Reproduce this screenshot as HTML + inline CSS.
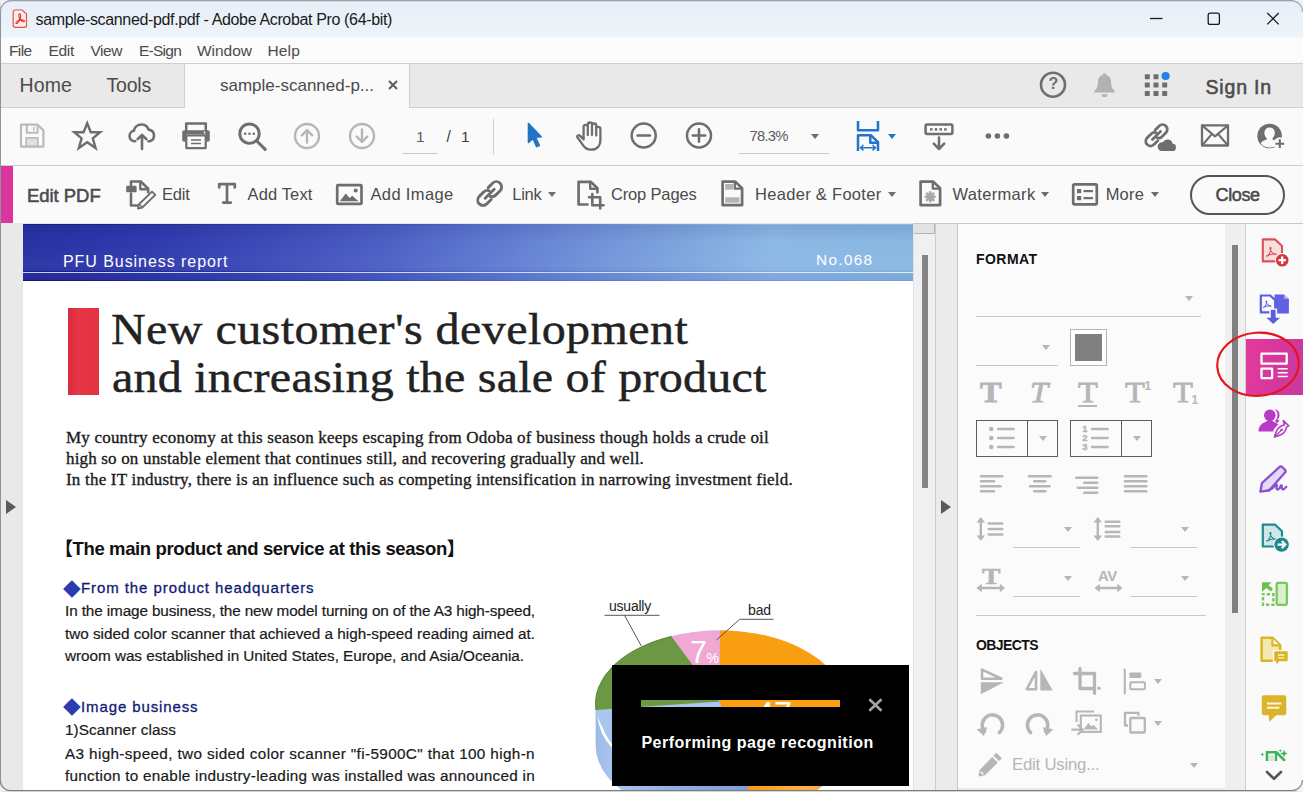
<!DOCTYPE html>
<html lang="en">
<head>
<meta charset="utf-8">
<title>sample-scanned-pdf.pdf - Adobe Acrobat Pro (64-bit)</title>
<style>
*{box-sizing:border-box;margin:0;padding:0}
html,body{width:1303px;height:792px;overflow:hidden;background:#fafafa;font-family:"Liberation Sans",sans-serif;color:#4b4b4b}
.abs,.t,svg.i{position:absolute}
#win{position:absolute;left:0;top:0;width:1303px;height:792px;overflow:hidden;background:#fafafa}
.t{white-space:nowrap;line-height:1}
svg.i{overflow:visible}
.s{fill:none;stroke:#6e6e6e;stroke-width:2;stroke-linecap:round;stroke-linejoin:round}
.f{fill:#6e6e6e;stroke:none}
.sd{fill:none;stroke:#b6b6b6;stroke-width:2;stroke-linecap:round;stroke-linejoin:round}
.fd{fill:#b6b6b6;stroke:none}
#titlebar{left:0;top:0;width:1303px;height:37px;background:linear-gradient(#e6eef7,#edf4fa)}
#menubar{left:0;top:37px;width:1303px;height:26px;background:#fbfbfb}
#tabbar{left:0;top:63px;width:1303px;height:45px;background:#e9e9e9;border-top:1px solid #cfcfcf;border-bottom:1px solid #cfcfcf}
#tabactive{left:184px;top:64px;width:226px;height:44px;background:#fafafa;border-left:1px solid #d0d0d0;border-right:1px solid #d0d0d0}
#toolbar{left:0;top:108px;width:1303px;height:58px;background:#fafafa;border-bottom:1px solid #cdcdcd}
#editbar{left:0;top:166px;width:1303px;height:57px;background:#fafafa}
#pinkbar{left:1px;top:166px;width:12px;height:57px;background:#d9359c}
.ul{position:absolute;height:1px;background:#c9c9c9}
.tri{position:absolute;width:0;height:0;border-left:4px solid transparent;border-right:4px solid transparent;border-top:5px solid #6e6e6e}
.tri.d{border-top-color:#b6b6b6}
.tri.b{border-top-color:#2274c8}
.ti{font-family:'Liberation Serif',serif;font-size:29px;color:#b6b6b6;-webkit-text-stroke:.8px #b6b6b6;transform:scaleX(1.12);transform-origin:0 0}
.bd{-webkit-text-stroke:.35px #1a1a1a}
.hd{-webkit-text-stroke:.45px #222}
.nv{-webkit-text-stroke:.3px #101a74}
.bt{-webkit-text-stroke:.2px #1a1a1a}
.sb{-webkit-text-stroke:.55px currentColor}
</style>
</head>
<body>
<div id="win">
<div class="abs" id="titlebar"></div>
<div class="abs" id="menubar"></div>
<div class="abs" id="tabbar"></div>
<div class="abs" id="tabactive"></div>
<div class="abs" id="toolbar"></div>
<div class="abs" id="editbar"></div>
<div class="abs" id="pinkbar"></div>
<!-- title icon -->
<svg class="i" style="left:12px;top:9px" width="16" height="20" viewBox="0 0 16 20"><path d="M3.200 1h7l4.300 4.100v11.200a2 2 0 0 1-2 2H3.200a2 2 0 0 1-2-2V3a2 2 0 0 1 2-2z" fill="#fdf0ef" stroke="#e4504a" stroke-width="1.200"/><g fill="none" stroke="#e5322c" stroke-width="1.100" stroke-linejoin="round"><path d="M8 10.600C6.500 7.600 6.300 4.900 7.600 4.700 9 4.600 9 7.600 8 10.600z"/><path d="M8 10.600C5.500 11.600 3.300 13.500 4 14.400 4.900 15.300 6.800 13.100 8 10.600z"/><path d="M8 10.600C10.500 10.500 12.800 11.100 12.600 12.200 12.300 13.300 9.800 12.400 8 10.600z"/></g></svg>
<!-- window controls -->
<svg class="i" style="left:1146px;top:8px" width="140" height="22" viewBox="0 0 140 22"><g fill="none" stroke="#1b1b1b" stroke-width="1.300"><path d="M4 10.500h12.500"/><rect x="62.200" y="5.200" width="11.200" height="11.200" rx="2"/><path d="M121.300 5l11.400 11.400M132.700 5l-11.400 11.400"/></g></svg>
<!-- tab close x -->
<svg class="i" style="left:388px;top:80px" width="10" height="10" viewBox="0 0 10 10"><path d="M1 1l8 8M9 1l-8 8" stroke="#5a5a5a" stroke-width="1.900" fill="none"/></svg>
<!-- help -->
<svg class="i" style="left:1039px;top:71px" width="28" height="28" viewBox="0 0 28 28"><circle cx="14" cy="13.700" r="12" class="s" style="stroke-width:2.60"/></svg>
<span class="t" style="left:1048.500px;top:76px;font-size:16px;font-weight:bold;color:#6e6e6e">?</span>
<!-- bell -->
<svg class="i" style="left:1093px;top:72px" width="23" height="27" viewBox="0 0 23 27"><path d="M11.500 1.200c1.100 0 1.800.8 1.800 1.900 3.200.9 4.800 3.600 4.800 7 0 4.500.9 6.600 3.600 8.900v1.500H1.300V19c2.700-2.300 3.600-4.400 3.600-8.900 0-3.400 1.600-6.100 4.800-7 0-1.100.7-1.900 1.800-1.900zM8.600 22.200h5.800a2.900 2.900 0 0 1-5.800 0z" fill="#b2b2b2"/></svg>
<!-- apps grid -->
<svg class="i" style="left:1144px;top:71px" width="27" height="27" viewBox="0 0 27 27"><g fill="#6e6e6e"><rect x=".8" y="3.200" width="5" height="5" rx=".6"/><rect x="9.500" y="3.200" width="5" height="5" rx=".6"/><rect x=".8" y="11.600" width="5" height="5" rx=".6"/><rect x="9.500" y="11.600" width="5" height="5" rx=".6"/><rect x="18.200" y="11.600" width="5" height="5" rx=".6"/><rect x=".8" y="20" width="5" height="5" rx=".6"/><rect x="9.500" y="20" width="5" height="5" rx=".6"/><rect x="18.200" y="20" width="5" height="5" rx=".6"/></g><circle cx="21.600" cy="5" r="4.100" fill="#2680eb"/></svg>
<!-- toolbar: save (disabled) -->
<svg class="i" style="left:19px;top:122px" width="27" height="27" viewBox="0 0 27 27"><path d="M2 2.700h16.500l5.900 5.700v16.200H2z" fill="none" stroke="#bababa" stroke-width="2.200" stroke-linejoin="round"/><path d="M7.800 3v7.800h10.800V3" fill="none" stroke="#bababa" stroke-width="2"/><rect x="14" y="4.800" width="1.500" height="4" fill="#bababa"/><rect x="7.200" y="15.800" width="11.600" height="8.400" fill="#e0e0e0" stroke="#bababa" stroke-width="1.600"/></svg>
<!-- star -->
<svg class="i" style="left:71px;top:120px" width="32" height="32" viewBox="0 0 32 32"><path d="M16.200 3.200l3.600 9h9.300l-7.300 6.100 2.800 9.700-8.400-5.800L7.800 28l2.800-9.700-7.300-6.100h9.300z" class="s" style="stroke-width:2.40;stroke-linejoin:miter"/></svg>
<!-- cloud upload -->
<svg class="i" style="left:127px;top:122px" width="30" height="29" viewBox="0 0 30 29"><path d="M8.200 19.300H7.500a5.300 5.300 0 0 1-.6-10.500 7.600 7.600 0 0 1 14.700-1.200 6 6 0 0 1 1.200 11.700h-1.300" class="s" style="stroke-width:2.60"/><path d="M15 27V13.500M10.600 17.200L15 12.800l4.400 4.400" class="s" style="stroke-width:2.60"/></svg>
<!-- printer -->
<svg class="i" style="left:181px;top:121px" width="30" height="29" viewBox="0 0 30 29"><path d="M5.200 9.500V2.400h19.600v7.100" class="s" style="stroke-width:2.50"/><path d="M3.200 9.200h23.600a2 2 0 0 1 2 2v7.600a2 2 0 0 1-2 2H25v-7.200H5v7.200H3.200a2 2 0 0 1-2-2v-7.600a2 2 0 0 1 2-2z" class="f"/><rect x="5.300" y="14.500" width="19.400" height="12.600" fill="#fafafa" stroke="#6e6e6e" stroke-width="2.200" stroke-linejoin="round"/><path d="M10 19h10M10 22.500h10" stroke="#6e6e6e" stroke-width="1.500"/><circle cx="23.600" cy="11.500" r=".9" fill="#fafafa"/></svg>
<!-- search -->
<svg class="i" style="left:237px;top:121px" width="31" height="31" viewBox="0 0 31 31"><circle cx="12.500" cy="12.700" r="9.700" class="s" style="stroke-width:2.90"/><path d="M19.800 20l8.400 8.300" class="s" style="stroke-width:3.10"/><circle cx="8.200" cy="12.700" r="1.300" class="f"/><circle cx="12.500" cy="12.700" r="1.300" class="f"/><circle cx="16.800" cy="12.700" r="1.300" class="f"/></svg>
<!-- up / down (disabled) -->
<svg class="i" style="left:293px;top:122px" width="28" height="28" viewBox="0 0 28 28"><circle cx="14" cy="14" r="12" class="sd" style="stroke-width:2.40"/><path d="M14 20.500V8.500M8.800 13.300L14 8l5.200 5.300" class="sd" style="stroke-width:2.40"/></svg>
<svg class="i" style="left:348px;top:122px" width="28" height="28" viewBox="0 0 28 28"><circle cx="14" cy="14" r="12" class="sd" style="stroke-width:2.40"/><path d="M14 7.500v12M8.800 14.700L14 20l5.200-5.300" class="sd" style="stroke-width:2.40"/></svg>
<div class="ul" style="left:402px;top:153px;width:36px"></div>
<div class="abs" style="left:493px;top:119px;width:1px;height:36px;background:#cfcfcf"></div>
<!-- select arrow (blue) -->
<svg class="i" style="left:526px;top:121px" width="18" height="28" viewBox="0 0 18 28"><path d="M2.500 2.500l12.700 13.300-5.800.4 3.900 8.200-2.600 1.200-3.800-8.300-4.400 4.200z" fill="#2274c8" stroke="#2274c8" stroke-width="1.600" stroke-linejoin="round"/></svg>
<!-- hand -->
<svg class="i" style="left:574px;top:121px" width="30" height="31" viewBox="0 0 30 31"><path d="M9.600 18.500V6a2.100 2.100 0 0 1 4.200 0v8V3.600a2.100 2.100 0 0 1 4.200 0V14V4.600a2.100 2.100 0 0 1 4.200 0v9.900V8a2.100 2.100 0 0 1 4.200 0v11c0 6-3.600 9.700-9.400 9.700-4.400 0-6.600-2-8.700-5.600L3.500 16.500c-1-1.700 1.300-3.200 2.700-1.600z" class="s" style="stroke-width:2.300"/></svg>
<!-- zoom out / in -->
<svg class="i" style="left:630px;top:122px" width="28" height="28" viewBox="0 0 28 28"><circle cx="13.700" cy="13.500" r="12" class="s" style="stroke-width:2.50"/><path d="M7.500 13.500h12.400" class="s" style="stroke-width:2.50"/></svg>
<svg class="i" style="left:685px;top:122px" width="28" height="28" viewBox="0 0 28 28"><circle cx="14" cy="13.500" r="12" class="s" style="stroke-width:2.50"/><path d="M7.800 13.500h12.400M14 7.300v12.400" class="s" style="stroke-width:2.50"/></svg>
<div class="ul" style="left:739px;top:153px;width:90px"></div>
<div class="tri" style="left:811px;top:134px"></div>
<!-- fit width (blue) -->
<svg class="i" style="left:856px;top:120px" width="24" height="32" viewBox="0 0 24 32"><g fill="none" stroke="#2274c8" stroke-width="2.500" stroke-linejoin="round"><path d="M2 1v9.300h20V1"/><path d="M2 31V15.200h12.800l7.200 7V31"/><path d="M14.300 15.500v7.200h7.400"/></g><path d="M4.500 27.700h15M7.500 25l-3 2.700 3 2.700M16.500 25l3 2.700-3 2.700" fill="none" stroke="#2274c8" stroke-width="1.500"/></svg>
<div class="tri b" style="left:888px;top:134px"></div>
<!-- keyboard / scroll -->
<svg class="i" style="left:924px;top:122px" width="30" height="29" viewBox="0 0 30 29"><rect x="1.600" y="2.500" width="26.800" height="9.500" rx="1.500" class="s" style="stroke-width:2.50"/><g class="f"><rect x="6" y="6.200" width="2.600" height="2.400"/><rect x="10.700" y="6.200" width="2.600" height="2.400"/><rect x="15.400" y="6.200" width="2.600" height="2.400"/><rect x="20.100" y="6.200" width="2.600" height="2.400"/></g><path d="M15 15.500v11.300M9.800 21.700L15 27l5.200-5.300" class="s" style="stroke-width:2.50"/></svg>
<!-- more dots -->
<svg class="i" style="left:985px;top:132px" width="25" height="8" viewBox="0 0 25 8"><circle cx="3.400" cy="4" r="2.800" class="f"/><circle cx="12.400" cy="4" r="2.800" class="f"/><circle cx="21.400" cy="4" r="2.800" class="f"/></svg>
<!-- link cloud -->
<svg class="i" style="left:1143px;top:121px" width="33" height="31" viewBox="0 0 33 31"><g class="s" style="stroke-width:3.1" transform="translate(.3 1.200) scale(.9)"><path d="M13.200 8.600l4.400-4.400a5.300 5.300 0 0 1 7.500 7.500l-4.400 4.400a5.300 5.300 0 0 1-5.600 1.200"/><path d="M16.200 20.500l-4.400 4.400a5.300 5.300 0 0 1-7.500-7.500l4.400-4.400a5.300 5.300 0 0 1 5.600-1.200"/><path d="M10.200 19.200l9-9"/></g><path d="M18.300 30h10.800a3.600 3.600 0 0 0 .5-7.200 5.200 5.200 0 0 0-9.700-1.500 4.400 4.400 0 0 0-1.600 8.700z" fill="#fafafa" stroke="#fafafa" stroke-width="2.400"/><path d="M18.300 30h10.800a3.600 3.600 0 0 0 .5-7.200 5.200 5.200 0 0 0-9.700-1.500 4.400 4.400 0 0 0-1.600 8.700z" class="f"/></svg>
<!-- mail -->
<svg class="i" style="left:1200px;top:123px" width="30" height="25" viewBox="0 0 30 25"><rect x="2" y="2.300" width="26" height="20.200" class="s" style="stroke-width:2.30"/><path d="M2.300 2.600L15 13.400 27.700 2.600M2.300 22.200l9.700-11.300M27.700 22.200L18 10.900" class="s" style="stroke-width:2.10"/></svg>
<!-- person + -->
<svg class="i" style="left:1256px;top:122px" width="31" height="29" viewBox="0 0 31 29"><circle cx="13.600" cy="14" r="12.300" class="f"/><path d="M13.600 5.400c3.400 0 5.200 2.600 5.200 5.600 0 2.600-1.200 4.300-2.300 5.200v1.400c3 .9 5.200 2.100 6.100 3.900a12 12 0 0 1-18 0c.9-1.800 3.100-3 6.100-3.900v-1.400c-1.100-.9-2.300-2.600-2.300-5.200 0-3 1.800-5.600 5.200-5.600z" fill="#fafafa"/><circle cx="23.800" cy="21.600" r="6.300" fill="#fafafa"/><path d="M23.800 17.300v8.800M19.400 21.700h8.800" stroke="#6e6e6e" stroke-width="2.100" fill="none"/></svg>
<!-- edit bar icons -->
<svg class="i" style="left:125px;top:179px" width="32" height="31" viewBox="0 0 32 31"><path d="M6 6.500V2.500h9.800l7.400 7.200v3.500M6 14.500v12h7.200" class="s" style="stroke-width:2.60"/><path d="M15.300 2.800v7.400h7.600" class="s" style="stroke-width:2.40"/><rect x="1.200" y="6.800" width="10.400" height="6.400" rx="1" class="f"/><path d="M27 12.600l3.300 3.300-13 12.600-4.300 1.100 1-4.300z" fill="#fafafa" stroke="#6e6e6e" stroke-width="1.900" stroke-linejoin="round"/><path d="M14.700 25.600l2.600 2.600" stroke="#6e6e6e" stroke-width="1.400" fill="none"/></svg>
<svg class="i" style="left:217px;top:182px" width="20" height="23" viewBox="0 0 20 23"><path d="M2.200 5.500V2.200h15.600v3.300M10 2.500v18M6.200 20.600h7.600" class="s" style="stroke-width:2.70"/></svg>
<svg class="i" style="left:335px;top:183px" width="29" height="23" viewBox="0 0 29 23"><rect x="2.200" y="2.200" width="24.300" height="18.700" rx="1" class="s" style="stroke-width:2.70"/><path d="M4.800 18.300l6-7.700 3.800 4.300 2.600-2.200 6.300 5.600z" class="f"/><circle cx="20.700" cy="7.400" r="2" class="f"/></svg>
<svg class="i" style="left:475px;top:179px" width="30" height="30" viewBox="0 0 30 30"><g class="s" style="stroke-width:2.90"><path d="M13.200 8.600l4.400-4.400a5.300 5.300 0 0 1 7.500 7.500l-4.400 4.400a5.300 5.300 0 0 1-5.600 1.200"/><path d="M16.200 20.500l-4.400 4.400a5.300 5.300 0 0 1-7.500-7.500l4.400-4.400a5.300 5.300 0 0 1 5.600-1.200"/><path d="M10.200 19.200l9-9"/></g></svg>
<div class="tri" style="left:547.500px;top:192px"></div>
<svg class="i" style="left:576px;top:179px" width="29" height="31" viewBox="0 0 29 31"><path d="M11.500 25.500H2.600V2.800h12.100l6.700 6.500v4" class="s" style="stroke-width:2.70"/><path d="M14.200 3.200v6.600h6.800" class="s" style="stroke-width:2.40"/><path d="M13 18.300h11.200v11.200M16.300 15v11.300h11.200" class="s" style="stroke-width:2.60"/></svg>
<svg class="i" style="left:720px;top:179px" width="25" height="29" viewBox="0 0 25 29"><path d="M2.600 2.600h12.600l6.900 6.700v16.800H2.600z" class="s" style="stroke-width:2.70"/><path d="M14.800 3v6.700h6.900" class="s" style="stroke-width:2.30"/><rect x="5.200" y="5" width="8" height="5.700" fill="#b4b4b4"/><rect x="5.200" y="18.300" width="14.300" height="5.400" fill="#b4b4b4"/></svg>
<div class="tri" style="left:888px;top:192px"></div>
<svg class="i" style="left:918px;top:179px" width="25" height="29" viewBox="0 0 25 29"><path d="M2.600 2.600h12.600l6.900 6.700v16.800H2.600z" class="s" style="stroke-width:2.70"/><path d="M14.800 3v6.700h6.900" class="s" style="stroke-width:2.30"/><g stroke="#a8a8a8" stroke-width="2.600" stroke-linecap="round"><path d="M12.200 13.300v9M7.700 17.800h9M9 14.600l6.400 6.400M15.400 14.600L9 21"/></g></svg>
<div class="tri" style="left:1041px;top:192px"></div>
<svg class="i" style="left:1071px;top:182px" width="28" height="25" viewBox="0 0 28 25"><rect x="2.200" y="2.300" width="23.600" height="20" rx="1.200" class="s" style="stroke-width:2.70"/><g class="f"><rect x="6" y="7" width="4.200" height="4.200"/><rect x="6" y="14" width="4.200" height="4.200"/><rect x="12.500" y="8" width="9.500" height="2.200"/><rect x="12.500" y="15" width="9.500" height="2.200"/></g></svg>
<div class="tri" style="left:1151px;top:192px"></div>
<div class="abs" style="left:1190px;top:174.500px;width:95px;height:40px;border:2px solid #555;border-radius:20px"></div>

<span class="t" id="ttl" style="left:35.5px;top:11.86px;font-size:16px;color:#1a1a1a;letter-spacing:-0.352px;">sample-scanned-pdf.pdf - Adobe Acrobat Pro (64-bit)</span>
<span class="t" id="m1" style="left:9px;top:43.38px;font-size:15.5px;color:#4b4b4b;letter-spacing:-0.621px;">File</span>
<span class="t" id="m2" style="left:48.5px;top:43.38px;font-size:15.5px;color:#4b4b4b;letter-spacing:-0.305px;">Edit</span>
<span class="t" id="m3" style="left:90.5px;top:43.38px;font-size:15.5px;color:#4b4b4b;letter-spacing:-0.457px;">View</span>
<span class="t" id="m4" style="left:139px;top:43.38px;font-size:15.5px;color:#4b4b4b;letter-spacing:-0.755px;">E-Sign</span>
<span class="t" id="m5" style="left:197px;top:43.38px;font-size:15.5px;color:#4b4b4b;letter-spacing:-0.023px;">Window</span>
<span class="t" id="m6" style="left:267.5px;top:43.38px;font-size:15.5px;color:#4b4b4b;letter-spacing:0.152px;">Help</span>
<span class="t" id="home" style="left:19.5px;top:76.09px;font-size:19.5px;color:#4b4b4b;letter-spacing:0.117px;">Home</span>
<span class="t" id="tools" style="left:106.5px;top:76.09px;font-size:19.5px;color:#4b4b4b;letter-spacing:-0.206px;">Tools</span>
<span class="t" id="tab" style="left:220px;top:77.11px;font-size:17px;color:#4b4b4b;">sample-scanned-p...</span>
<span class="t sb" id="signin" style="left:1205.5px;top:78.19px;font-size:19.5px;color:#4b4b4b;letter-spacing:0.826px;">Sign In</span>
<span class="t" id="pg1" style="left:416px;top:129.18px;font-size:15.5px;color:#5c5c5c;">1</span>
<span class="t" id="pg2" style="left:446.5px;top:129.18px;font-size:15.5px;color:#3c3c3c;transform:scaleY(1.05);">/</span>
<span class="t" id="pg3" style="left:461px;top:129.18px;font-size:15.5px;color:#3c3c3c;">1</span>
<span class="t" id="zoom" style="left:749.5px;top:129.47px;font-size:14.8px;color:#5c5c5c;letter-spacing:-0.754px;">78.3%</span>
<span class="t sb" id="editpdf" style="left:27px;top:186.54px;font-size:18.5px;color:#4b4b4b;letter-spacing:-0.041px;">Edit PDF</span>
<span class="t" id="e1" style="left:162px;top:185.63px;font-size:16.5px;color:#4b4b4b;letter-spacing:-0.209px;">Edit</span>
<span class="t" id="e2" style="left:247.5px;top:185.63px;font-size:16.5px;color:#4b4b4b;letter-spacing:0.137px;">Add Text</span>
<span class="t" id="e3" style="left:370.5px;top:185.63px;font-size:16.5px;color:#4b4b4b;letter-spacing:0.354px;">Add Image</span>
<span class="t" id="e4" style="left:512.3px;top:185.63px;font-size:16.5px;color:#4b4b4b;letter-spacing:-0.295px;">Link</span>
<span class="t" id="e5" style="left:611px;top:185.63px;font-size:16.5px;color:#4b4b4b;letter-spacing:-0.164px;">Crop Pages</span>
<span class="t" id="e6" style="left:755px;top:185.63px;font-size:16.5px;color:#4b4b4b;letter-spacing:0.301px;">Header &amp; Footer</span>
<span class="t" id="e7" style="left:952.5px;top:185.63px;font-size:16.5px;color:#4b4b4b;letter-spacing:0.326px;">Watermark</span>
<span class="t" id="e8" style="left:1105.7px;top:185.63px;font-size:16.5px;color:#4b4b4b;letter-spacing:0.177px;">More</span>
<span class="t sb" id="close" style="left:1215.5px;top:185.56px;font-size:18px;color:#4b4b4b;letter-spacing:-0.366px;">Close</span>

<!-- document area -->
<div class="abs" style="left:13px;top:223px;width:900px;height:1px;background:#e6e6e6"></div>
<div class="abs" id="navstrip" style="left:1px;top:223px;width:22px;height:568px;background:#e9e9e9"></div>
<div class="abs" style="left:6px;top:500px;width:0;height:0;border-top:7px solid transparent;border-bottom:7px solid transparent;border-left:10px solid #5a5a5a"></div>
<div class="abs" id="page" style="left:23px;top:224px;width:890px;height:568px;background:#fff;overflow:hidden">
 <div class="abs" id="banner" style="left:0;top:0;width:890px;height:57px;background:linear-gradient(90deg,#2832a4 0%,#2f3aad 14%,#3c4ab8 27%,#4b5ec4 40%,#5d78d0 52%,#6f8fd8 63%,#7fa7de 75%,#8cb8e6 84%,#89b7e1 100%)"></div>
 <div class="abs" style="left:0;top:0;width:890px;height:1px;background:linear-gradient(90deg,rgba(10,10,90,.5),rgba(10,10,90,.15) 50%,rgba(10,10,90,0) 80%)"></div>
 <div class="abs" style="left:0;top:1px;width:890px;height:56px;background:linear-gradient(180deg,rgba(10,10,70,.10) 0%,rgba(10,10,70,0) 30%,rgba(255,255,255,.03) 70%,rgba(0,0,60,.04) 100%)"></div>
 <div class="abs" style="left:0;top:49px;width:890px;height:8px;background:linear-gradient(90deg,rgba(20,20,120,.22),rgba(40,70,190,.14) 55%,rgba(60,100,200,.10))"></div>
 <div class="abs" style="left:0;top:46.800px;width:890px;height:1px;background:linear-gradient(90deg,rgba(10,10,100,.55),rgba(30,50,150,.2) 50%,rgba(30,50,150,.05))"></div>
 <div class="abs" style="left:0;top:47.700px;width:890px;height:1.300px;background:linear-gradient(90deg,#c8cef5,#cfdcf6 60%,#e2ecfa)"></div>
 <div class="abs" style="left:0;top:56px;width:890px;height:1px;background:linear-gradient(90deg,rgba(16,16,100,.7),rgba(60,90,180,.3) 55%,rgba(90,130,210,.25))"></div>
 <div class="abs" id="redblock" style="left:45.300px;top:84.400px;width:30.500px;height:86.600px;background:linear-gradient(90deg,#d92c3e,#e83546 35%,#e4303f)"></div>
 <!-- pie chart: coordinates relative to page (page origin 23,224) -->
 <svg class="i" style="left:0;top:0" width="890" height="568" viewBox="23 224 890 568">
  <defs>
   <linearGradient id="gside" x1="0" y1="0" x2="1" y2="0"><stop offset="0" stop-color="#9dbbe6"/><stop offset=".12" stop-color="#a9c6ee"/><stop offset=".5" stop-color="#8fb0e2"/><stop offset="1" stop-color="#7d9fd8"/></linearGradient>
   <linearGradient id="gor" x1="0" y1="0" x2="1" y2="0"><stop offset="0" stop-color="#f79a12"/><stop offset=".6" stop-color="#fbb24a"/><stop offset="1" stop-color="#f5a030"/></linearGradient>
  </defs>
  <!-- side wall -->
  <path d="M595.600 703.500V745A124 73 0 0 0 748 816.500V703.500z" fill="url(#gside)"/>
  <path d="M748 703.500V816.500A124 73 0 0 0 843.600 745V703.500z" fill="url(#gor)"/>
  <path d="M598.500 716c1.500 11 6 22 14.500 31" fill="none" stroke="#fff" stroke-width="2.600"/>
  <!-- top face -->
  <ellipse cx="719.600" cy="703.500" rx="124" ry="73" fill="#a9c7ee"/>
  <!-- orange 47% -->
  <path d="M719.600 701.500V630.500A124 73 0 0 1 743.300 775.200z" fill="#fb9f12"/>
  <!-- pink 7% -->
  <path d="M719.600 701.500V630.500A124 73 0 0 0 671.300 636.300z" fill="#f2a8d4"/>
  <!-- green -->
  <path d="M719.600 701.500L671.300 636.300A124 73 0 0 0 596 710z" fill="#6c9743"/>
  <path d="M596 710A124 73 0 0 1 671.300 636.300" fill="none" stroke="#5b8438" stroke-width="1"/>
  <!-- labels leader lines -->
  <path d="M604.500 615.300H659.500M624.500 615.300L641.300 646" fill="none" stroke="#444" stroke-width=".9"/>
  <path d="M773.500 619.300H739.600L716.500 640" fill="none" stroke="#444" stroke-width=".9"/>
  <text x="690" y="662.500" font-family="Liberation Sans,sans-serif" font-size="31" fill="#fff" textLength="17" lengthAdjust="spacingAndGlyphs">7</text>
  <text x="706.500" y="662.500" font-family="Liberation Sans,sans-serif" font-size="14" fill="#fff">%</text>
  <text x="756" y="725" font-family="Liberation Sans,sans-serif" font-size="33" fill="#fff" textLength="36" lengthAdjust="spacingAndGlyphs">47</text>
 </svg>

</div>
<span class="t" id="d1" style="left:63px;top:253.66px;font-size:16px;color:#fff;letter-spacing:0.942px;">PFU Business report</span>
<span class="t" id="d2" style="left:816px;top:251.66px;font-size:15.4px;color:#fff;letter-spacing:1.310px;">No.068</span>
<span class="t hd" id="h1" style="left:111px;top:306.93px;font-size:44.5px;font-family:'Liberation Serif',serif;color:#222;letter-spacing:0.384px;transform:scaleX(1.08);transform-origin:0 50%;">New customer&#39;s development</span>
<span class="t hd" id="h2" style="left:112px;top:354.53px;font-size:44.5px;font-family:'Liberation Serif',serif;color:#222;letter-spacing:0.198px;transform:scaleX(1.08);transform-origin:0 50%;">and increasing the sale of product</span>
<span class="t bd" id="p1" style="left:66px;top:429.26px;font-size:17px;font-family:'Liberation Serif',serif;color:#1a1a1a;letter-spacing:0.201px;">My country economy at this season keeps escaping from Odoba of business though holds a crude oil</span>
<span class="t bd" id="p2" style="left:66px;top:449.76px;font-size:17px;font-family:'Liberation Serif',serif;color:#1a1a1a;letter-spacing:0.170px;">high so on unstable element that continues still, and recovering gradually and well.</span>
<span class="t bd" id="p3" style="left:66px;top:470.76px;font-size:17px;font-family:'Liberation Serif',serif;color:#1a1a1a;letter-spacing:0.204px;">In the IT industry, there is an influence such as competing intensification in narrowing investment field.</span>
<span class="t" id="s0" style="left:54.5px;top:540.34px;font-size:18.5px;font-family:'Liberation Sans','Noto Sans CJK JP',sans-serif;font-weight:bold;color:#111;letter-spacing:-0.382px;">【The main product and service at this season】</span>
<span class="t" id="s1d" style="left:63.2px;top:575.73px;font-size:23px;color:#2a3cb0;">◆</span>
<span class="t nv" id="s1" style="left:81px;top:580.40px;font-size:15px;color:#101a74;letter-spacing:0.921px;">From the product headquarters</span>
<span class="t bt" id="b1" style="left:65px;top:603.05px;font-size:15.3px;color:#1a1a1a;letter-spacing:-0.115px;">In the image business, the new model turning on of the A3 high-speed,</span>
<span class="t bt" id="b2" style="left:65px;top:625.55px;font-size:15.3px;color:#1a1a1a;letter-spacing:-0.016px;">two sided color scanner that achieved a high-speed reading aimed at.</span>
<span class="t bt" id="b3" style="left:65px;top:647.85px;font-size:15.3px;color:#1a1a1a;letter-spacing:-0.042px;">wroom was established in United States, Europe, and Asia/Oceania.</span>
<span class="t" id="s2d" style="left:63.2px;top:694.23px;font-size:23px;color:#2a3cb0;">◆</span>
<span class="t nv" id="s2" style="left:81px;top:698.90px;font-size:15px;color:#101a74;letter-spacing:0.888px;">Image business</span>
<span class="t bt" id="b4" style="left:65px;top:722.35px;font-size:15.3px;color:#1a1a1a;letter-spacing:0.087px;">1)Scanner class</span>
<span class="t bt" id="b5" style="left:65px;top:745.65px;font-size:15.3px;color:#1a1a1a;letter-spacing:0.352px;">A3 high-speed, two sided color scanner &quot;fi-5900C&quot; that 100 high-n</span>
<span class="t bt" id="b6" style="left:65px;top:768.05px;font-size:15.3px;color:#1a1a1a;letter-spacing:0.267px;">function to enable industry-leading was installed was announced in</span>
<span class="t" id="l1" style="left:609px;top:598.85px;font-size:14px;color:#222;letter-spacing:-0.228px;">usually</span>
<span class="t" id="l2" style="left:748px;top:602.85px;font-size:14px;color:#222;letter-spacing:-0.120px;">bad</span>
<!-- progress toast -->
<div class="abs" id="toast" style="left:612px;top:665px;width:297px;height:121px;border-style:solid;border-color:#000;border-width:35px 69px 79.500px 29px"></div>
<svg class="i" style="left:868px;top:698px" width="15" height="14" viewBox="0 0 15 14"><path d="M1.300 1.200l12.200 11.600M13.500 1.200L1.300 12.800" stroke="#a4a4a4" stroke-width="2.600" fill="none"/></svg>

<span class="t" id="tst" style="left:641.4px;top:735.26px;font-size:16px;font-weight:bold;color:#fff;letter-spacing:0.504px;">Performing page recognition</span>
<!-- doc scrollbar + splitter -->
<div class="abs" style="left:913px;top:224px;width:22px;height:566px;background:#f0f0f0;border-left:1px solid #e2e2e2"></div>
<div class="abs" style="left:914px;top:224px;width:21px;height:10px;background:#e3e3e3;border-bottom:1px solid #b4b4b4;border-right:1px solid #b4b4b4"></div>
<div class="abs" style="left:922px;top:255px;width:6px;height:232.500px;background:#848484"></div>
<div class="abs" style="left:935px;top:224px;width:23px;height:566px;background:#ebebeb;border-left:1px solid #cdcdcd;border-right:1px solid #c6c6c6"></div>
<div class="abs" style="left:941px;top:500px;width:0;height:0;border-top:7px solid transparent;border-bottom:7px solid transparent;border-left:10px solid #5a5a5a"></div>
<div class="abs" style="left:913px;top:223px;width:390px;height:1px;background:#c8c8c8"></div>

<!-- right format panel -->
<div class="abs" id="panel" style="left:958px;top:224px;width:267px;height:564px;background:#fbfbfb"></div>
<div class="abs" style="left:958px;top:788px;width:345px;height:4px;background:#ebebeb"></div>
<div class="abs" style="left:1225px;top:224px;width:20px;height:567px;background:#efefef"></div>
<div class="abs" style="left:1232px;top:245px;width:6px;height:367.500px;background:#808080"></div>
<div class="abs" style="left:1245px;top:224px;width:1px;height:567px;background:#cfcfcf"></div>
<!-- dropdown lines -->
<div class="ul" style="left:976px;top:316px;width:225px;background:#c6c6c6"></div>
<div class="tri d" style="left:1185px;top:296px"></div>
<div class="ul" style="left:976px;top:365px;width:82px;background:#c6c6c6"></div>
<div class="tri d" style="left:1042px;top:345px"></div>
<div class="abs" style="left:1070px;top:329px;width:37px;height:37px;background:#fff;border:1px solid #b4b4b4"></div>
<div class="abs" style="left:1075px;top:334px;width:27px;height:27px;background:#808080"></div>
<!-- T style icons -->
<span class="t ti" style="left:980px;top:378px;font-weight:bold">T</span>
<span class="t ti" style="left:1030px;top:378px;font-style:italic">T</span>
<span class="t ti" style="left:1077.500px;top:378px">T</span>
<div class="abs" style="left:1078px;top:405px;width:19px;height:1.500px;background:#b6b6b6"></div>
<span class="t ti" style="left:1124.500px;top:378px">T</span><span class="t" style="left:1144.500px;top:380px;font-size:12px;font-weight:bold;color:#b6b6b6">1</span>
<span class="t ti" style="left:1173px;top:378px">T</span><span class="t" style="left:1191.500px;top:394px;font-size:12px;font-weight:bold;color:#b6b6b6">1</span>
<!-- list boxes -->
<div class="abs" style="left:976px;top:420px;width:82px;height:37px;border:1px solid #5e5e5e"></div>
<div class="abs" style="left:1027px;top:420px;width:1px;height:37px;background:#5e5e5e"></div>
<svg class="i" style="left:988px;top:424px" width="28" height="28" viewBox="0 0 28 28"><g class="fd"><circle cx="3.300" cy="5" r="2.300"/><circle cx="3.300" cy="14" r="2.300"/><circle cx="3.300" cy="23" r="2.300"/><rect x="8.800" y="3.800" width="18" height="2.500" rx="1.200"/><rect x="8.800" y="12.800" width="18" height="2.500" rx="1.200"/><rect x="8.800" y="21.800" width="18" height="2.500" rx="1.200"/></g></svg>
<div class="tri d" style="left:1039px;top:436px"></div>
<div class="abs" style="left:1070px;top:420px;width:82px;height:37px;border:1px solid #5e5e5e"></div>
<div class="abs" style="left:1121px;top:420px;width:1px;height:37px;background:#5e5e5e"></div>
<svg class="i" style="left:1082px;top:424px" width="28" height="28" viewBox="0 0 28 28"><g class="fd"><rect x="8.800" y="3.800" width="18" height="2.500" rx="1.200"/><rect x="8.800" y="12.800" width="18" height="2.500" rx="1.200"/><rect x="8.800" y="21.800" width="18" height="2.500" rx="1.200"/></g><g font-family="Liberation Sans,sans-serif" font-size="9.500" font-weight="bold" fill="#b6b6b6" stroke="#b6b6b6" stroke-width=".4"><text x=".3" y="8.300">1</text><text x=".3" y="17.300">2</text><text x=".3" y="26.300">3</text></g></svg>
<div class="tri d" style="left:1133px;top:436px"></div>
<!-- align icons -->
<svg class="i" style="left:979px;top:474px" width="170" height="22" viewBox="0 0 170 22"><g class="fd"><rect x=".8" y="1" width="23.700" height="2.600" rx="1.300"/><rect x=".8" y="6" width="15.500" height="2.600" rx="1.300"/><rect x=".8" y="11" width="22" height="2.600" rx="1.300"/><rect x=".8" y="16" width="15.500" height="2.600" rx="1.300"/>
<rect x="48.800" y="1" width="24" height="2.600" rx="1.300"/><rect x="54" y="6" width="13.600" height="2.600" rx="1.300"/><rect x="49.800" y="11" width="22" height="2.600" rx="1.300"/><rect x="54" y="16" width="13.600" height="2.600" rx="1.300"/>
<rect x="96" y="2.500" width="23.500" height="2.600" rx="1.300"/><rect x="104" y="7.500" width="15.500" height="2.600" rx="1.300"/><rect x="97.500" y="12.500" width="22" height="2.600" rx="1.300"/><rect x="104" y="17.500" width="15.500" height="2.600" rx="1.300"/>
<rect x="144.700" y="1" width="23.800" height="2.600" rx="1.300"/><rect x="144.700" y="6" width="23.800" height="2.600" rx="1.300"/><rect x="144.700" y="11" width="23.800" height="2.600" rx="1.300"/><rect x="144.700" y="16" width="23.800" height="2.600" rx="1.300"/></g></svg>
<!-- line spacing -->
<svg class="i" style="left:976px;top:516px" width="30" height="26" viewBox="0 0 30 26"><g class="fd"><path d="M4.800 1l4.300 5.500H6v13h3.100L4.800 25 .5 19.500h3.100v-13H.5z"/><rect x="11.500" y="6.200" width="16" height="2.600" rx="1.300"/><rect x="11.500" y="11.700" width="16" height="2.600" rx="1.300"/><rect x="11.500" y="17.200" width="16" height="2.600" rx="1.300"/></g></svg>
<div class="ul" style="left:1013px;top:547px;width:67px;background:#c6c6c6"></div>
<div class="tri d" style="left:1064px;top:527px"></div>
<svg class="i" style="left:1093px;top:516px" width="30" height="26" viewBox="0 0 30 26"><g class="fd"><path d="M4.800 1l4.300 5.500H6v13h3.100L4.800 25 .5 19.500h3.100v-13H.5z"/><rect x="11.500" y="4.500" width="16" height="2.500" rx="1.200"/><rect x="11.500" y="9" width="16" height="2.500" rx="1.200"/><rect x="11.500" y="14.800" width="16" height="2.500" rx="1.200"/><rect x="11.500" y="19.300" width="16" height="2.500" rx="1.200"/></g></svg>
<div class="ul" style="left:1130px;top:547px;width:67px;background:#c6c6c6"></div>
<div class="tri d" style="left:1181px;top:527px"></div>
<!-- horizontal scale / char spacing -->
<span class="t" style="left:982px;top:563.500px;font-family:'Liberation Serif',serif;font-size:24px;font-weight:bold;color:#b6b6b6;-webkit-text-stroke:.6px #b6b6b6;transform:scaleX(1.150);transform-origin:0 0">T</span>
<svg class="i" style="left:976px;top:583px" width="30" height="10" viewBox="0 0 30 10"><path d="M.5 5L5.800.8v2.900h18V.8L29.100 5l-5.300 4.200V6.300h-18v2.900z" class="fd"/></svg>
<div class="ul" style="left:1013px;top:596px;width:67px;background:#c6c6c6"></div>
<div class="tri d" style="left:1064px;top:576px"></div>
<span class="t" style="left:1098px;top:567.500px;font-size:15px;font-weight:bold;color:#b6b6b6;letter-spacing:-.5px">AV</span>
<svg class="i" style="left:1094px;top:583px" width="30" height="10" viewBox="0 0 30 10"><path d="M.5 5L5.800.8v2.900h17.400V.8L28.500 5l-5.300 4.200V6.300H5.800v2.900z" class="fd"/></svg>
<div class="ul" style="left:1130px;top:596px;width:67px;background:#c6c6c6"></div>
<div class="tri d" style="left:1181px;top:576px"></div>
<div class="ul" style="left:976px;top:615px;width:230px;background:#c8c8c8"></div>
<!-- objects icons -->
<svg class="i" style="left:980px;top:667px" width="25" height="28" viewBox="0 0 25 28"><path d="M2 2.600l19.500 9.200H2z" fill="none" stroke="#b6b6b6" stroke-width="2.600" stroke-linejoin="round"/><path d="M.8 15.200h23L.8 27.200z" class="fd"/></svg>
<svg class="i" style="left:1024px;top:668px" width="30" height="24" viewBox="0 0 30 24"><path d="M12 3.800v17.400H2.800z" fill="none" stroke="#b6b6b6" stroke-width="2.600" stroke-linejoin="round"/><path d="M16.300 .8l12.500 21.600H16.300z" class="fd"/></svg>
<svg class="i" style="left:1072px;top:666px" width="30" height="30" viewBox="0 0 30 30"><g fill="none" stroke="#b6b6b6" stroke-width="3.300" stroke-linecap="round" stroke-linejoin="round"><path d="M2.500 7.500h20v19.800"/><path d="M8 2.500v20h12.500"/></g><circle cx="27" cy="22.300" r="1.700" class="fd"/></svg>
<svg class="i" style="left:1123px;top:668px" width="25" height="27" viewBox="0 0 25 27"><path d="M1.800 1.500v24" fill="none" stroke="#b6b6b6" stroke-width="2.100" stroke-linecap="round"/><rect x="6.300" y="4.500" width="12" height="5.600" rx="1" class="fd"/><rect x="7.300" y="14.300" width="14.600" height="7" rx=".8" fill="none" stroke="#b6b6b6" stroke-width="2"/></svg>
<div class="tri d" style="left:1154px;top:679px"></div>
<svg class="i" style="left:976px;top:710px" width="30" height="27" viewBox="0 0 30 27"><path d="M8.500 21.500A10.200 10.200 0 1 1 23.400 22.500" fill="none" stroke="#b6b6b6" stroke-width="3.500" stroke-linecap="round"/><path d="M.6 19.200l10.600-1.900-3.300 8.800z" class="fd"/></svg>
<svg class="i" style="left:1024px;top:710px" width="30" height="27" viewBox="0 0 30 27"><path d="M21.500 21.500A10.200 10.200 0 1 0 6.600 22.500" fill="none" stroke="#b6b6b6" stroke-width="3.500" stroke-linecap="round"/><path d="M29.400 19.200l-10.600-1.900 3.300 8.800z" class="fd"/></svg>
<svg class="i" style="left:1071px;top:709px" width="32" height="28" viewBox="0 0 32 28"><path d="M5.500 13V2.500h17.500" fill="none" stroke="#b6b6b6" stroke-width="2" stroke-linejoin="round"/><rect x="9.800" y="6.500" width="20" height="16.400" fill="none" stroke="#b6b6b6" stroke-width="2.100"/><path d="M12.500 20.500l5-6.500 3 3.500 2-1.700 4.500 4.700z" class="fd"/><circle cx="25.300" cy="10.800" r="1.400" class="fd"/><path d="M1.300 20.700h9.500M7.300 16.300l4.400 4.400-4.400 4.400" fill="none" stroke="#b6b6b6" stroke-width="2.300" stroke-linecap="round" stroke-linejoin="round"/></svg>
<svg class="i" style="left:1123px;top:711px" width="25" height="24" viewBox="0 0 25 24"><path d="M5 14.500H2V1.800h13.500v3" fill="none" stroke="#b6b6b6" stroke-width="2.300" stroke-linejoin="round"/><rect x="7.300" y="7" width="14.500" height="14.500" rx=".8" fill="none" stroke="#b6b6b6" stroke-width="2.300"/></svg>
<div class="tri d" style="left:1154px;top:721px"></div>
<svg class="i" style="left:977px;top:751px" width="28" height="26" viewBox="0 0 28 26"><path d="M19.300 1.800l5.600 5.400-2.800 2.900-5.600-5.400zM15.200 6l5.600 5.400L8 24.300l-6.600 1.300 1.200-6.500z" class="fd"/><path d="M3.800 20.800l2.500 2.500" stroke="#fafafa" stroke-width="1.400" fill="none"/></svg>
<div class="tri d" style="left:1190px;top:763px"></div>

<span class="t" id="fmt" style="left:976px;top:251.85px;font-size:14px;font-weight:bold;color:#111;letter-spacing:0.443px;">FORMAT</span>
<span class="t" id="obj" style="left:976px;top:637.75px;font-size:14px;font-weight:bold;color:#111;letter-spacing:-0.589px;">OBJECTS</span>
<span class="t" id="eu" style="left:1012px;top:756.78px;font-size:16.8px;color:#b6b6b6;letter-spacing:-0.230px;">Edit Using...</span>

<!-- right tools strip -->
<div class="abs" style="left:1246px;top:224px;width:57px;height:566px;background:#fafafa"></div>
<!-- create pdf -->
<svg class="i" style="left:1260px;top:237px" width="31" height="31" viewBox="0 0 31 31"><path d="M2.800 2.400h12.400l6.800 6.600v15.400H2.800z" fill="#f9dede" stroke="#d8535d" stroke-width="2.100" stroke-linejoin="round"/><path d="M6.800 19c1.300.7 3.700-4 4.200-7.500.2-1.500-1.200-1.600-1.100-.2.200 2.600 3.300 6 6.300 6.200" fill="none" stroke="#d8535d" stroke-width="1.100" stroke-linecap="round"/><path d="M6.800 19c1.800-1.300 5.700-2.200 9.300-2" fill="none" stroke="#d8535d" stroke-width="1.100" stroke-linecap="round"/><circle cx="22.200" cy="23.200" r="7.300" fill="#fafafa"/><circle cx="22.200" cy="23.200" r="6.300" fill="#d7373f"/><path d="M22.200 19.500v7.400M18.500 23.200h7.400" stroke="#fff" stroke-width="2.300" fill="none"/></svg>
<!-- export pdf -->
<svg class="i" style="left:1258px;top:292px" width="33" height="33" viewBox="0 0 33 33"><path d="M16.500 2.400h9.800l4.600 4.400v14.600H16.500z" fill="#6161e2"/><path d="M26.300 2.400v4.400h4.600z" fill="#fafafa" opacity=".6"/><path d="M2.800 3.500h9.400l5 4.800v12.100H2.800z" fill="#fafafa" stroke="#5c5ce0" stroke-width="2.200" stroke-linejoin="round"/><path d="M5.600 15.300c1 .6 2.800-3 3.200-5.600.2-1.200-.9-1.300-.8-.2.200 2 2.500 4.600 4.800 4.800M5.600 15.300c1.400-1 4.400-1.700 7.200-1.500" fill="none" stroke="#5c5ce0" stroke-width="1" stroke-linecap="round"/><path d="M11.300 16.500h7.800v8h5.600l-9.500 8.500-9.500-8.500h5.600z" fill="#fafafa"/><path d="M12.800 17.800h4.800v7.900h4.400l-6.800 6.200-6.800-6.200h4.400z" fill="#5c5ce0"/></svg>
<!-- active edit tile -->
<div class="abs" id="tile" style="left:1246px;top:338.500px;width:57px;height:56px;background:linear-gradient(100deg,#e43a9b 0%,#d5379c 55%,#c63ba0 100%)"></div>
<svg class="i" style="left:1259px;top:351px" width="31" height="30" viewBox="0 0 31 30"><g fill="none" stroke="#fff" stroke-width="2.300" stroke-linejoin="round"><rect x="2.500" y="2.700" width="25.200" height="10"/><rect x="2.500" y="17.700" width="10.600" height="9.400"/></g><path d="M18.700 17.800h10M18.700 21.700h10M18.700 25.600h10" stroke="#fff" stroke-width="1.500" fill="none"/></svg>
<!-- red annotation ellipse -->
<svg class="i" style="left:1210px;top:326px" width="93" height="76" viewBox="1210 326 93 76"><ellipse cx="1258" cy="364.300" rx="40.800" ry="31.600" fill="none" stroke="#e8121a" stroke-width="2.100" transform="rotate(-4 1258 364.300)"/></svg>
<!-- request signatures -->
<svg class="i" style="left:1257px;top:407px" width="34" height="32" viewBox="0 0 34 32"><g fill="#b63ac6"><path d="M17.500 2.300c3.300.3 5 2.700 5 5.600 0 2.200-1 3.900-2 4.900l2.100.9-2.300 2.200-2.300-1.700c1.600-1.800 2.500-3.600 2.500-6.200 0-2.400-1-4.500-3-5.700z"/><circle cx="12.800" cy="8.300" r="5.800"/><path d="M12.800 13c2 0 3.200 1.200 3.800 1.800 1.800.7 3.500 1.600 4.600 2.600l-4.400 4.900-.6 2.300H1.500c0-5 2.600-8.200 7.500-9.800.6-.6 1.800-1.800 3.800-1.800z"/></g><path d="M26.300 13.500l5.400 5.400-2.200 1.200c-.5 3.600-3 6.800-7.500 8.500l-4.500 1.400 1.400-4.500c1.700-4.500 4.900-7 8.500-7.500z" fill="#fafafa" stroke="#b63ac6" stroke-width="1.600" stroke-linejoin="round"/><path d="M18 29.500l6-6" stroke="#b63ac6" stroke-width="1.300" fill="none"/><circle cx="24.600" cy="22.900" r="1.300" fill="#b63ac6"/></svg>
<!-- fill & sign -->
<svg class="i" style="left:1257px;top:464px" width="34" height="32" viewBox="0 0 34 32"><path d="M22.300 3.200a2.200 2.200 0 0 1 3.100 0l2.400 2.400a2.200 2.200 0 0 1 0 3.100L12.300 26.300l-9 1.300 1.700-8.600z" fill="#e6d8f8" stroke="#8a50d2" stroke-width="2.300" stroke-linejoin="round"/><path d="M10.800 26.500c3-.6 5.700-2.600 7.500-5.300.8-1.200 2-.6 1.500.7-.7 1.700-.6 3.500.8 3.600 1.600.1 2.300-2 3-3.600.3-.8 1.300-.5 1.200.4-.2 1.500 0 2.900 1.200 3 1.400.1 2.400-1.300 3.300-2.500" fill="none" stroke="#8a50d2" stroke-width="2.300" stroke-linecap="round" stroke-linejoin="round"/></svg>
<!-- send for review -->
<svg class="i" style="left:1260px;top:522px" width="31" height="31" viewBox="0 0 31 31"><path d="M2.800 2.700h12.400l6.800 6.600v15.200H2.800z" fill="#cfe5e8" stroke="#1f8a90" stroke-width="2.200" stroke-linejoin="round"/><path d="M6.800 19c1.300.7 3.700-4 4.200-7.500.2-1.500-1.200-1.600-1.100-.2.200 2.600 3.300 6 6.300 6.200M6.800 19c1.800-1.300 5.700-2.200 9.300-2" fill="none" stroke="#1f8a90" stroke-width="1.100" stroke-linecap="round"/><circle cx="21.600" cy="22.600" r="8.200" fill="#fafafa"/><circle cx="21.600" cy="22.600" r="7.200" fill="#1a8a8e"/><path d="M17.500 22.600h7M21.800 19l3.600 3.600-3.600 3.600" stroke="#fff" stroke-width="2.200" fill="none" stroke-linejoin="miter"/></svg>
<!-- organize pages -->
<svg class="i" style="left:1260px;top:580px" width="30" height="28" viewBox="0 0 30 28"><rect x="16.700" y="2.800" width="10.200" height="22" rx="1.200" fill="#dcefd0" stroke="#7ac858" stroke-width="2.300"/><path d="M3 14.300h10.400v10.400H3z" fill="none" stroke="#7ac858" stroke-width="2.500" stroke-dasharray="3.300 2" stroke-dashoffset="1.600"/><path d="M2 2.200h9.600L8.600 5.200l4.400 3.500-2.100 2.700-4.400-3.500L2 11.800z" fill="#6cc04a"/></svg>
<!-- add comment to page -->
<svg class="i" style="left:1259px;top:635px" width="31" height="31" viewBox="0 0 31 31"><path d="M2.600 2.800h11.200l7.400 7.200v15.700H2.600z" fill="#f3e7b2" stroke="#d8b71f" stroke-width="2.400" stroke-linejoin="round"/><path d="M13.400 3.200v7.200h7.400" fill="#fafafa" stroke="#d8b71f" stroke-width="2.200" stroke-linejoin="round"/><path d="M13.800 15h16v12.600H20.500l-2.700 3.200-.3-3.200h-3.700z" fill="#fafafa"/><path d="M16.300 16.300h11.400a1 1 0 0 1 1 1v8a1 1 0 0 1-1 1h-7.600l-2.600 3.300-.2-3.300h-1a1 1 0 0 1-1-1v-8a1 1 0 0 1 1-1z" fill="#d9b521"/><path d="M19 20h6.300M19 22.800h6.300" stroke="#fbf3cf" stroke-width="1.300" fill="none"/></svg>
<!-- comment -->
<svg class="i" style="left:1260px;top:694px" width="28" height="29" viewBox="0 0 28 29"><path d="M3.800 1.300h20.500a2 2 0 0 1 2 2v16a2 2 0 0 1-2 2H16.200l-6.900 6.600-.6-6.600H3.800a2 2 0 0 1-2-2v-16a2 2 0 0 1 2-2z" fill="#dcb42b"/><path d="M7 9.600h14.200M7 13.800h12.400" stroke="#fdf6d8" stroke-width="2" fill="none"/></svg>
<!-- enhance (clipped) -->
<svg class="i" style="left:1259px;top:749px;overflow:hidden" width="31" height="12" viewBox="0 0 31 12"><path d="M8 12V3.300h9.500L26 12" fill="none" stroke="#3eb45c" stroke-width="2.600" stroke-linejoin="miter"/><path d="M17 4v8" stroke="#3eb45c" stroke-width="2.400" fill="none"/><rect x="9.300" y="6.500" width="6.500" height="6" fill="#d5e9d4"/><path d="M25 .5l1.100 2.900 2.900 1.100-2.900 1.100L25 8.500l-1.100-2.900L21 4.500l2.900-1.100z" fill="#3eb45c"/><path d="M21.300 0l.5 1.300 1.300.5-1.300.5-.5 1.300-.5-1.300-1.300-.5 1.300-.5z" fill="#3eb45c"/><path d="M3.300 3.300l.6 1.600 1.600.6-1.600.6-.6 1.600-.6-1.600-1.600-.6 1.600-.6z" fill="#3eb45c"/></svg>
<svg class="i" style="left:1265px;top:770px" width="18" height="11" viewBox="0 0 18 11"><path d="M2 2l7 6.800L16 2" fill="none" stroke="#555" stroke-width="2.600" stroke-linecap="round" stroke-linejoin="round"/></svg>

<!-- window frame -->
<div class="abs" style="left:0;top:0;width:1px;height:792px;background:#8d939b"></div>
<div class="abs" style="left:0;top:790px;width:1303px;height:1px;background:#7d7d7d"></div>
<div class="abs" style="left:0;top:791px;width:1303px;height:1px;background:#d4d4d4"></div>
<svg class="i" style="left:0;top:0" width="1303" height="792" viewBox="0 0 1303 792"><path d="M0 0h12A12 12 0 0 0 .5 10z" fill="#f3f3f3"/><path d="M.5 12A11 11 0 0 1 11 .6H1292" fill="none" stroke="#9aa0a8" stroke-width="1.200"/><path d="M1303 0h-11a11 11 0 0 1 11 11z" fill="#f3f3f3"/><path d="M1291 .6a11 11 0 0 1 11.500 11" fill="none" stroke="#9aa0a8" stroke-width="1.200"/><path d="M0 792v-10a9 9 0 0 0 9 9z" fill="#f3f3f3"/><path d="M1303 792v-12a11 11 0 0 1-11 11z" fill="#f3f3f3"/><path d="M1302.500 780a10.500 10.500 0 0 1-10.500 10.500" fill="none" stroke="#8a8a8a" stroke-width="1.200"/><path d="M.5 781a9.500 9.500 0 0 0 9.500 9.500" fill="none" stroke="#8a8a8a" stroke-width="1.200"/></svg>

</div>
</body>
</html>
